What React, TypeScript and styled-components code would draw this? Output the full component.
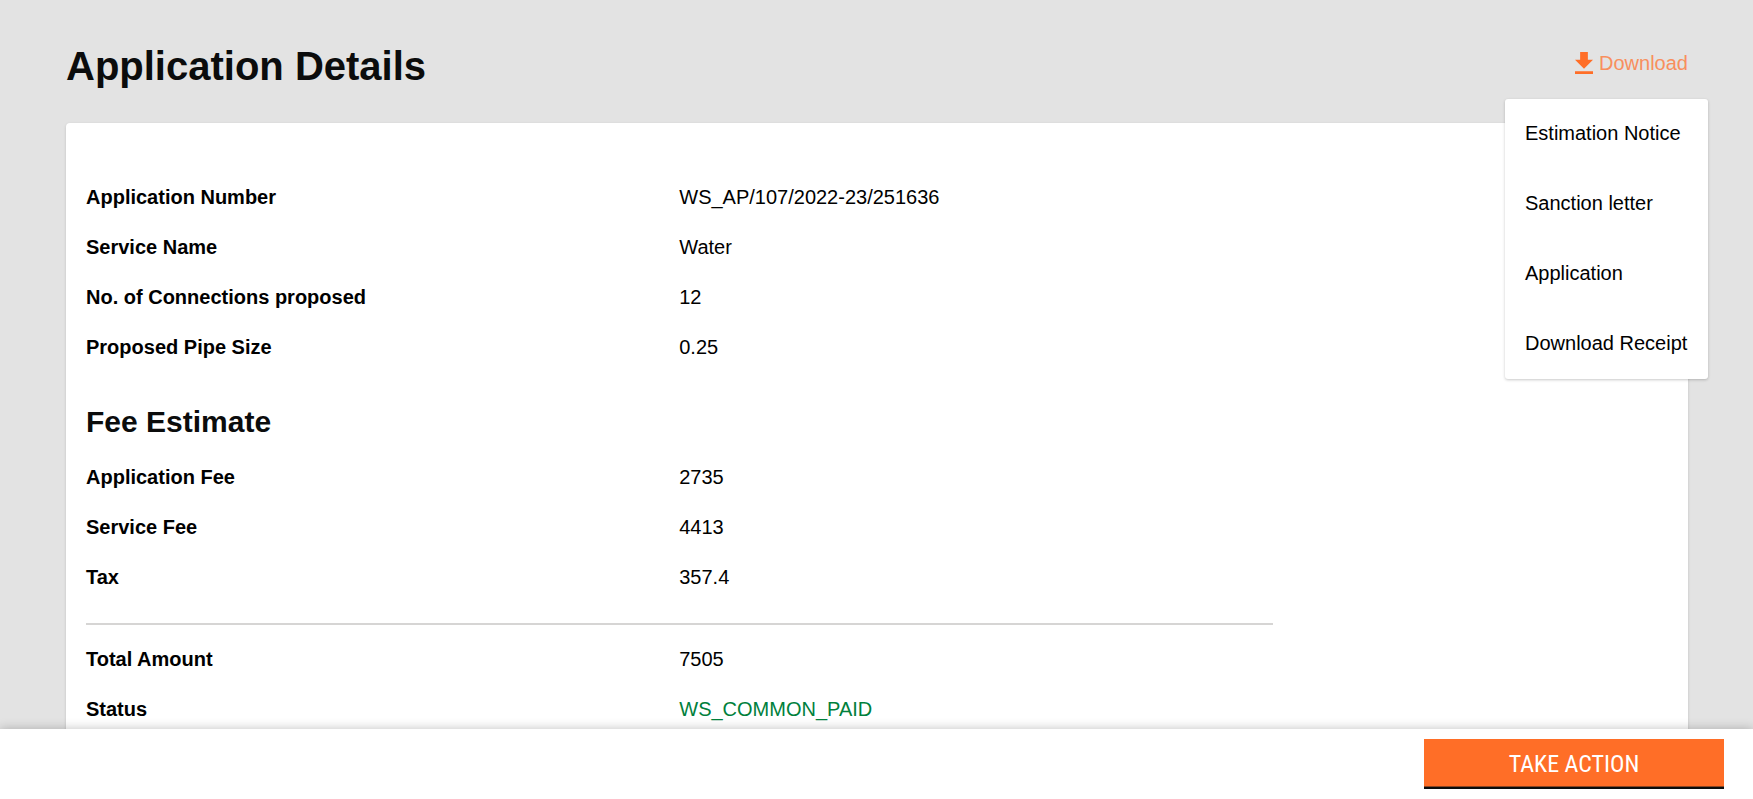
import React from "react";
import styled, { createGlobalStyle } from "styled-components";

const Global = createGlobalStyle`
  * { box-sizing: border-box; }
  body {
    margin: 0;
    background: #e3e3e3;
    color: #000;
    font-family: "Liberation Sans", Arial, sans-serif;
    font-size: 20px;
    line-height: 26px;
    overflow: hidden;
  }
`;

const Page = styled.div`
  height: 100vh;
  display: flex;
  flex-direction: column;
`;

const Content = styled.main`
  flex: 1;
  min-height: 0;
  overflow: hidden;
  padding: 40px 65px 0 66px;
`;

const Header = styled.header`
  display: flex;
  justify-content: space-between;
  align-items: flex-start;
  height: 83px;
`;

const Title = styled.h1`
  margin: 0;
  padding-top: 4px;
  color: #0b0c0c;
  font-size: 40px;
  line-height: 44px;
  font-weight: 700;
`;

const DownloadArea = styled.div`
  position: relative;
  padding-top: 10px;
`;

const DownloadButton = styled.button`
  display: flex;
  align-items: center;
  gap: 6px;
  padding: 0;
  border: 0;
  background: none;
  color: #f88f5d;
  font: inherit;
  cursor: pointer;
`;

const Menu = styled.div`
  position: absolute;
  z-index: 2;
  top: 59px;
  right: -20px;
  min-width: 203px;
  background: #fff;
  border-radius: 3px;
  box-shadow: 0 1px 3px rgba(0, 0, 0, 0.22);
`;

const MenuItem = styled.button`
  display: block;
  width: 100%;
  height: 70px;
  padding: 0 20px 2px;
  border: 0;
  background: none;
  color: #000;
  font: inherit;
  text-align: left;
  white-space: nowrap;
  cursor: pointer;
`;

const Card = styled.section`
  min-height: 100%;
  padding: 61px 20px 20px;
  background: #fff;
  border-radius: 4px;
  box-shadow: 0 1px 3px rgba(0, 0, 0, 0.16);
`;

const Details = styled.dl`
  margin: 0;
`;

const Row = styled.div`
  display: grid;
  grid-template-columns: 37.5% 1fr;
  margin-bottom: 24px;
`;

const Label = styled.dt`
  font-weight: 700;
`;

const Value = styled.dd<{ $paid?: boolean }>`
  margin: 0;
  color: ${(p) => (p.$paid ? "#00803c" : "inherit")};
`;

const SectionTitle = styled.h2`
  margin: 44px 0 24px;
  color: #0b0c0c;
  font-size: 30px;
  line-height: 36px;
  font-weight: 700;
`;

const Divider = styled.hr`
  width: 75%;
  height: 2px;
  margin: 33px 0 21px;
  border: 0;
  background: #d6d5d4;
`;

const ActionBar = styled.footer`
  position: relative;
  z-index: 3;
  display: flex;
  justify-content: flex-end;
  height: 70px;
  padding: 10px 29px 0;
  background: #fff;
  box-shadow: 0 0 10px rgba(0, 0, 0, 0.25);
`;

const ActionButton = styled.button`
  width: 300px;
  height: 50px;
  padding: 0;
  border: 0;
  background: #ff6e27;
  box-shadow: inset 0 -2px 0 #0b0c0c, inset 0 -3px 0 #8c4420;
  color: #fff;
  font-family: "Roboto Condensed", Roboto, sans-serif;
  font-stretch: condensed;
  font-size: 24px;
  cursor: pointer;
`;

type Entry = { label: string; value: string; paid?: boolean };

const summary: Entry[] = [
  { label: "Application Number", value: "WS_AP/107/2022-23/251636" },
  { label: "Service Name", value: "Water" },
  { label: "No. of Connections proposed", value: "12" },
  { label: "Proposed Pipe Size", value: "0.25" },
];
const fees: Entry[] = [
  { label: "Application Fee", value: "2735" },
  { label: "Service Fee", value: "4413" },
  { label: "Tax", value: "357.4" },
];
const totals: Entry[] = [
  { label: "Total Amount", value: "7505" },
  { label: "Status", value: "WS_COMMON_PAID", paid: true },
];
const documents = ["Estimation Notice", "Sanction letter", "Application", "Download Receipt"];

const DetailList = ({ entries }: { entries: Entry[] }) => (
  <Details>
    {entries.map((e) => (
      <Row key={e.label}>
        <Label>{e.label}</Label>
        <Value $paid={e.paid}>{e.value}</Value>
      </Row>
    ))}
  </Details>
);

export default function App() {
  return (
    <Page>
      <Global />
      <Content>
        <Header>
          <Title>Application Details</Title>
          <DownloadArea>
            <DownloadButton type="button" aria-expanded="true">
              <svg width="18" height="22" viewBox="5 3 14 17" fill="#ff6e27" aria-hidden="true">
                <path d="M19 9h-4V3H9v6H5l7 7 7-7zM5 18v2h14v-2H5z" />
              </svg>
              Download
            </DownloadButton>
            <Menu>
              {documents.map((d) => (
                <MenuItem type="button" key={d}>{d}</MenuItem>
              ))}
            </Menu>
          </DownloadArea>
        </Header>
        <Card>
          <DetailList entries={summary} />
          <SectionTitle>Fee Estimate</SectionTitle>
          <DetailList entries={fees} />
          <Divider />
          <DetailList entries={totals} />
        </Card>
      </Content>
      <ActionBar>
        <ActionButton type="button">TAKE ACTION</ActionButton>
      </ActionBar>
    </Page>
  );
}
